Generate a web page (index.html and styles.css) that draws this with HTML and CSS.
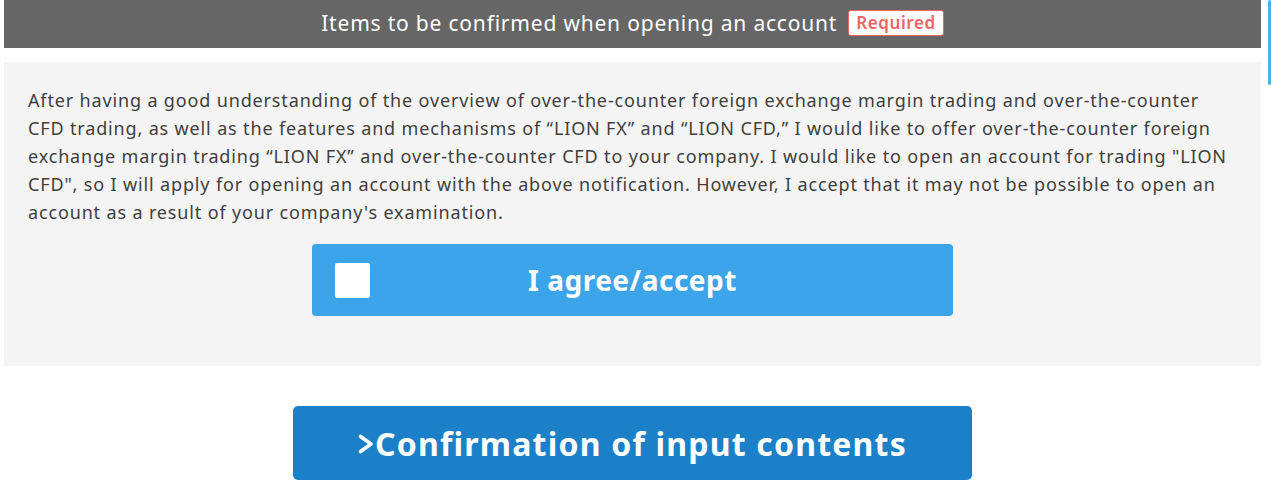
FILE: index.html
```html
<!DOCTYPE html>
<html lang="en">
<head>
<meta charset="utf-8">
<title>Items to be confirmed</title>
<link rel="stylesheet" href="styles.css">
</head>
<body>
<div class="page">
  <h2 class="section-title">Items to be confirmed when opening an account <span class="badge">Required</span></h2>
  <div class="panel">
    <p class="notice">After having a good understanding of the overview of over-the-counter foreign exchange margin trading and over-the-counter CFD trading, as well as the features and mechanisms of “LION FX” and “LION CFD,” I would like to offer over-the-counter foreign exchange margin trading “LION FX” and over-the-counter CFD to your company. I would like to open an account for trading "LION CFD", so I will apply for opening an account with the above notification. However, I accept that it may not be possible to open an account as a result of your company's examination.</p>
    <label class="agree">
      <span class="checkbox"></span>
      <span class="agree-text">I agree/accept</span>
    </label>
  </div>
  <div class="actions">
    <button class="confirm" type="button"><svg class="chev" width="16" height="20" viewBox="0 0 16 20"><polyline points="2.5,2.5 13,10 2.5,17.5" fill="none" stroke="#ffffff" stroke-width="3.6" stroke-linecap="round" stroke-linejoin="round"/></svg>Confirmation of input contents</button>
  </div>
</div>
<div class="scroll-thumb"></div>
</body>
</html>
```
FILE: styles.css
```css
html, body {
  margin: 0;
  padding: 0;
  background: #ffffff;
}
body {
  font-family: "Noto Sans", "Open Sans", sans-serif;
  color: #3f3f3f;
}
.page {
  margin: 0 10px 0 4px;
}
.section-title {
  margin: 0;
  height: 48px;
  background: #666666;
  color: #ffffff;
  font-size: 21px;
  font-weight: 400;
  letter-spacing: 0.8px;
  display: flex;
  align-items: center;
  justify-content: center;
  gap: 11px;
  padding-bottom: 2px;
  box-sizing: border-box;
}
.badge {
  background: #ffffff;
  color: #ec6464;
  border: 1px solid #ec6464;
  border-radius: 3px;
  font-size: 17px;
  font-weight: 600;
  letter-spacing: 0.6px;
  padding: 0 7px;
  line-height: 24px;
}
.panel {
  margin-top: 14px;
  background: #f4f4f4;
  padding: 24px 24px 50px 24px;
}
.notice {
  margin: 0;
  font-size: 18px;
  line-height: 28px;
  letter-spacing: 0.85px;
}
.agree {
  margin: 18px auto 0;
  width: 641px;
  height: 72px;
  background: #3ca4e9;
  border-radius: 4px;
  display: flex;
  align-items: center;
  box-sizing: border-box;
  padding-left: 23px;
}
.checkbox {
  width: 35px;
  height: 35px;
  background: #ffffff;
  border-radius: 2px;
}
.agree-text {
  flex: 1;
  text-align: center;
  color: #ffffff;
  font-size: 28px;
  font-weight: 700;
  letter-spacing: 0.5px;
  margin-right: 58px;
}
.actions {
  display: flex;
  justify-content: center;
  padding-top: 40px;
}
.confirm {
  width: 679px;
  height: 74px;
  background: #1b80c8;
  color: #ffffff;
  border: none;
  border-radius: 5px;
  font-family: inherit;
  font-size: 32px;
  font-weight: 700;
  letter-spacing: 1.2px;
  display: flex;
  align-items: center;
  justify-content: center;
  gap: 1px;
}
.chev {
  display: block;
  margin-top: 2px;
}
.scroll-thumb {
  position: absolute;
  top: 0;
  right: 0;
  width: 3px;
  height: 85px;
  background: #4db1ea;
  border-radius: 2px;
}
```
